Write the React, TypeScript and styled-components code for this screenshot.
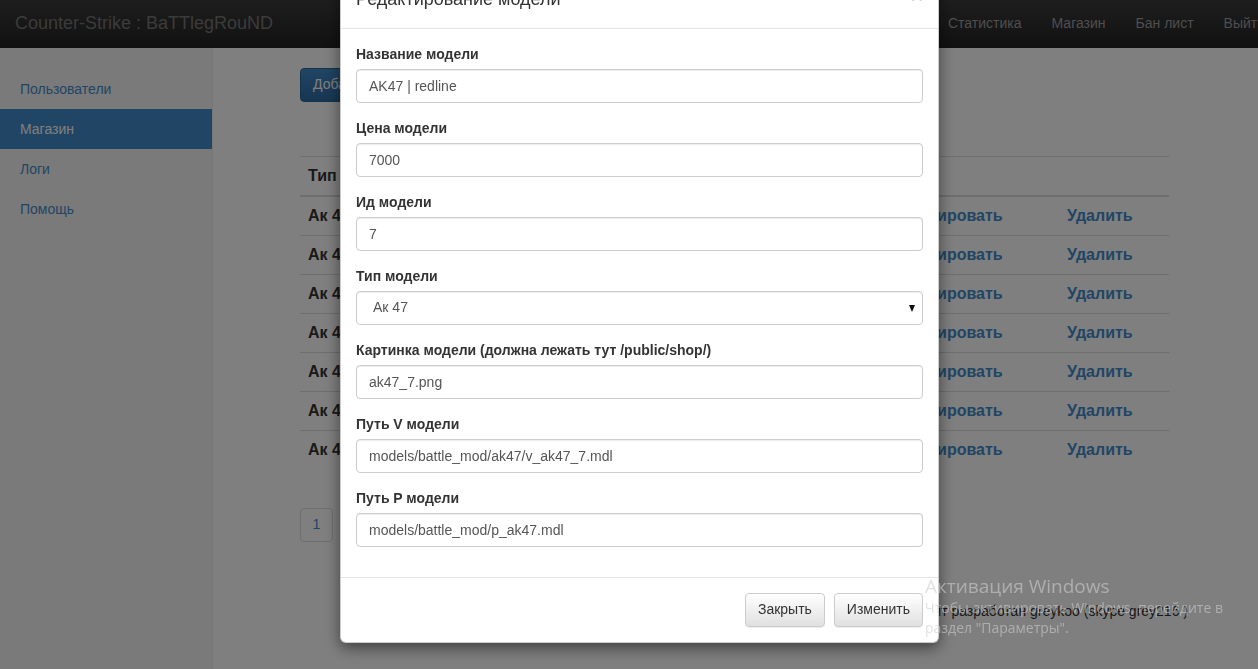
import React from "react";
import styled, { createGlobalStyle } from "styled-components";

const GlobalStyle = createGlobalStyle`
  html, body {
    margin: 0;
    padding: 0;
    height: 100%;
    overflow: hidden;
    background: #fff;
    font-family: "Liberation Sans", Arial, sans-serif;
    font-size: 14px;
    line-height: 1.42857;
    color: #333;
  }
  * { box-sizing: border-box; }
`;

const Navbar = styled.header`
  display: flex;
  align-items: center;
  height: 48px;
  background: linear-gradient(to bottom, #3c3c3c 0%, #222 100%);
  overflow: hidden;
`;

const Brand = styled.span`
  padding: 0 15px;
  font-size: 18px;
  color: #777;
  white-space: nowrap;
`;

const NavList = styled.nav`
  display: flex;
  margin-left: auto;
  margin-right: -22px;
`;

const NavLink = styled.a`
  padding: 0 15px;
  color: #9d9d9d;
  text-decoration: none;
  white-space: nowrap;
`;

const Layout = styled.div`
  display: flex;
  height: calc(100vh - 48px);
`;

const Sidebar = styled.aside`
  width: 213px;
  flex-shrink: 0;
  padding-top: 21px;
  background: #f5f5f5;
  border-right: 1px solid #eee;
`;

const SideItem = styled.a<{ $active?: boolean }>`
  display: block;
  height: 40px;
  line-height: 40px;
  padding: 0 20px;
  color: ${(p) => (p.$active ? "#fff" : "#428bca")};
  background: ${(p) => (p.$active ? "#428bca" : "transparent")};
  text-decoration: none;
`;

const Main = styled.main`
  flex: 1;
  padding: 20px 89px 0 87px;
`;

const PrimaryButton = styled.button`
  height: 34px;
  padding: 6px 12px;
  font: inherit;
  color: #fff;
  background: linear-gradient(to bottom, #428bca 0%, #2d6ca2 100%);
  border: 1px solid #2b669a;
  border-radius: 4px;
`;

const Table = styled.table`
  width: 100%;
  margin-top: 54px;
  border-collapse: collapse;
  border-top: 1px solid #ddd;
  font-size: 16px;
  font-weight: bold;

  th, td {
    padding: 9px 8px;
    line-height: 20px;
    text-align: left;
    white-space: nowrap;
  }
  thead th {
    border-bottom: 2px solid #ddd;
  }
  tbody tr + tr td {
    border-top: 1px solid #ddd;
  }
`;

const TableLink = styled.a`
  color: #428bca;
  text-decoration: none;
`;

const Pagination = styled.div`
  display: flex;
  margin-top: 39px;
`;

const PageItem = styled.span`
  width: 33px;
  height: 34px;
  display: flex;
  align-items: center;
  justify-content: center;
  color: #428bca;
  border: 1px solid #ddd;
  border-radius: 4px;
`;

const Footer = styled.p`
  margin: 60px -19px 0 0;
  text-align: right;
  color: #333;
`;

const Backdrop = styled.div`
  position: fixed;
  inset: 0;
  background: rgba(0, 0, 0, 0.5);
`;

const Modal = styled.div`
  position: fixed;
  top: -29px;
  left: 340px;
  width: 599px;
  background: #fff;
  border: 1px solid rgba(0, 0, 0, 0.2);
  border-radius: 6px;
  box-shadow: 0 5px 15px rgba(0, 0, 0, 0.5);
`;

const ModalHeader = styled.div`
  display: flex;
  align-items: flex-start;
  padding: 15px;
  border-bottom: 1px solid #e5e5e5;
`;

const ModalTitle = styled.h4`
  margin: 0;
  flex: 1;
  font-size: 18px;
  font-weight: normal;
  line-height: 1.42857;
`;

const CloseButton = styled.span`
  margin-top: -2px;
  font-size: 21px;
  font-weight: bold;
  line-height: 1;
  color: #000;
  opacity: 0.2;
`;

const ModalBody = styled.div`
  padding: 15px;
`;

const FormGroup = styled.div`
  margin-bottom: 15px;
`;

const Label = styled.label`
  display: block;
  margin-bottom: 5px;
  font-weight: bold;
  line-height: 20px;
`;

const Input = styled.input`
  display: block;
  width: 100%;
  height: 34px;
  padding: 6px 12px;
  font: inherit;
  color: #555;
  background: #fff;
  border: 1px solid #ccc;
  border-radius: 4px;
  box-shadow: inset 0 1px 1px rgba(0, 0, 0, 0.075);
  outline: none;
`;

const SelectWrap = styled.div`
  position: relative;

  &::after {
    content: "";
    position: absolute;
    right: 8px;
    top: 14px;
    border-left: 3.5px solid transparent;
    border-right: 3.5px solid transparent;
    border-top: 7px solid #111;
    pointer-events: none;
  }
`;

const Select = styled.select`
  display: block;
  width: 100%;
  height: 34px;
  padding: 6px 12px 6px 16px;
  font: inherit;
  color: #555;
  background: #fff;
  border: 1px solid #ccc;
  border-radius: 4px;
  box-shadow: inset 0 1px 1px rgba(0, 0, 0, 0.075);
  appearance: none;
  outline: none;
`;

const ModalFooter = styled.div`
  display: flex;
  justify-content: flex-end;
  gap: 9px;
  padding: 15px;
  border-top: 1px solid #e5e5e5;
`;

const DefaultButton = styled.button`
  height: 34px;
  padding: 6px 12px;
  font: inherit;
  color: #333;
  background: linear-gradient(to bottom, #fff 0%, #e0e0e0 100%);
  border: 1px solid #ccc;
  border-radius: 4px;
  box-shadow: inset 0 1px 0 rgba(255, 255, 255, 0.15), 0 1px 1px rgba(0, 0, 0, 0.075);
`;

const Watermark = styled.div`
  position: fixed;
  left: 925px;
  top: 574px;
  font-family: "Open Sans", "Noto Sans", sans-serif;
  color: rgba(205, 205, 205, 0.6);
  pointer-events: none;
`;

const WatermarkTitle = styled.div`
  font-size: 19px;
  line-height: 24px;
`;

const WatermarkText = styled.div`
  font-size: 14px;
  line-height: 20px;
`;

const rows = Array.from({ length: 7 }, (_, i) => i);

const fields = [
  { label: "Название модели", value: "AK47 | redline" },
  { label: "Цена модели", value: "7000" },
  { label: "Ид модели", value: "7" },
  { label: "Тип модели", value: "Ак 47", select: true },
  { label: "Картинка модели (должна лежать тут /public/shop/)", value: "ak47_7.png" },
  { label: "Путь V модели", value: "models/battle_mod/ak47/v_ak47_7.mdl" },
  { label: "Путь P модели", value: "models/battle_mod/p_ak47.mdl" },
];

const App: React.FC = () => {
  return (
    <>
      <GlobalStyle />
      <Navbar>
        <Brand>Counter-Strike : BaTTlegRouND</Brand>
        <NavList>
          <NavLink>Статистика</NavLink>
          <NavLink>Магазин</NavLink>
          <NavLink>Бан лист</NavLink>
          <NavLink>Выйти</NavLink>
        </NavList>
      </Navbar>
      <Layout>
        <Sidebar>
          <SideItem>Пользователи</SideItem>
          <SideItem $active>Магазин</SideItem>
          <SideItem>Логи</SideItem>
          <SideItem>Помощь</SideItem>
        </Sidebar>
        <Main>
          <PrimaryButton>Добавить модель</PrimaryButton>
          <Table>
            <thead>
              <tr>
                <th style={{ width: 120 }}>Тип</th>
                <th style={{ width: 200 }}>Название</th>
                <th style={{ width: 120 }}>Цена</th>
                <th style={{ width: 135 }}>Картинка</th>
                <th style={{ width: 184 }}></th>
                <th></th>
              </tr>
            </thead>
            <tbody>
              {rows.map((i) => (
                <tr key={i}>
                  <td>Ак 47</td>
                  <td>AK47 | redline</td>
                  <td>7000</td>
                  <td>ak47_{i + 1}.png</td>
                  <td>
                    <TableLink>Редактировать</TableLink>
                  </td>
                  <td>
                    <TableLink>Удалить</TableLink>
                  </td>
                </tr>
              ))}
            </tbody>
          </Table>
          <Pagination>
            <PageItem>1</PageItem>
          </Pagination>
          <Footer>Сайт разработан greykoo (skype grey216 )</Footer>
        </Main>
      </Layout>

      <Backdrop />

      <Modal>
        <ModalHeader>
          <ModalTitle>Редактирование модели</ModalTitle>
          <CloseButton>×</CloseButton>
        </ModalHeader>
        <ModalBody>
          {fields.map((f) => (
            <FormGroup key={f.label}>
              <Label>{f.label}</Label>
              {f.select ? (
                <SelectWrap>
                  <Select defaultValue={f.value}>
                    <option>{f.value}</option>
                  </Select>
                </SelectWrap>
              ) : (
                <Input defaultValue={f.value} />
              )}
            </FormGroup>
          ))}
        </ModalBody>
        <ModalFooter>
          <DefaultButton>Закрыть</DefaultButton>
          <DefaultButton>Изменить</DefaultButton>
        </ModalFooter>
      </Modal>

      <Watermark>
        <WatermarkTitle>Активация Windows</WatermarkTitle>
        <WatermarkText>Чтобы активировать Windows, перейдите в</WatermarkText>
        <WatermarkText>раздел "Параметры".</WatermarkText>
      </Watermark>
    </>
  );
};

export default App;
